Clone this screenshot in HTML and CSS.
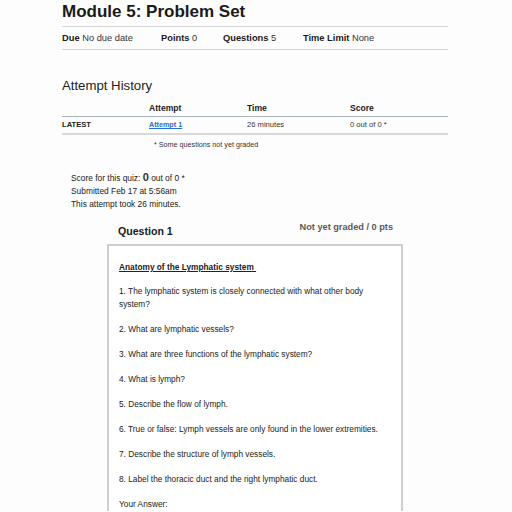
FILE: index.html
```html
<!DOCTYPE html>
<html>
<head>
<meta charset="utf-8">
<link rel="stylesheet" href="styles.css">
</head>
<body>
<div class="page">
  <h1 class="title">Module 5: Problem Set</h1>
  <div class="info">
    <span class="info-item i1"><b>Due</b> No due date</span>
    <span class="info-item i2"><b>Points</b> 0</span>
    <span class="info-item i3"><b>Questions</b> 5</span>
    <span class="info-item i4"><b>Time Limit</b> None</span>
  </div>

  <h2 class="history">Attempt History</h2>
  <div class="table">
    <div class="row head">
      <span class="c1"></span>
      <span class="c2">Attempt</span>
      <span class="c3">Time</span>
      <span class="c4">Score</span>
    </div>
    <div class="row body">
      <span class="c1 latest">LATEST</span>
      <span class="c2"><a class="link">Attempt 1 </a></span>
      <span class="c3">26 minutes</span>
      <span class="c4">0 out of 0 *</span>
    </div>
  </div>
  <p class="footnote">* Some questions not yet graded</p>

  <div class="summary">
    <div>Score for this quiz: <span class="big">0</span> out of 0 *</div>
    <div>Submitted Feb 17 at 5:56am</div>
    <div>This attempt took 26 minutes.</div>
  </div>

  <div class="question">
    <div class="qhead">
      <span class="qtitle">Question 1</span>
      <span class="qpts">Not yet graded / 0 pts</span>
    </div>
    <div class="qbox">
      <p class="qsub"><u>Anatomy of the Lymphatic system&nbsp;</u></p>
      <p>1. The lymphatic system is closely connected with what other body system?</p>
      <p>2. What are lymphatic vessels?</p>
      <p>3. What are three functions of the lymphatic system?</p>
      <p>4. What is lymph?</p>
      <p>5. Describe the flow of lymph.</p>
      <p>6. True or false: Lymph vessels are only found in the lower extremities.</p>
      <p>7. Describe the structure of lymph vessels.</p>
      <p>8. Label the thoracic duct and the right lymphatic duct.</p>
      <p class="last">Your Answer:</p>
    </div>
  </div>
</div>
</body>
</html>
```
FILE: styles.css
```css
html, body {
  margin: 0;
  padding: 0;
  background: #fdfdfd;
  overflow: hidden;
}
body {
  font-family: "Liberation Sans", Arial, sans-serif;
  color: #222;
  width: 512px;
  height: 512px;
}
.page {
  padding: 0 64px 0 62px;
}
.title {
  margin: 0;
  padding-top: 2px;
  font-size: 17px;
  font-weight: bold;
  line-height: 20px;
  height: 24px;
  border-bottom: 1px solid #d6d6d6;
  color: #1a1a1a;
}
.info {
  position: relative;
  height: 22px;
  border-bottom: 1px solid #d6d6d6;
  font-size: 9.3px;
  line-height: 22px;
  color: #333;
}
.info-item b { color: #1a1a1a; }
.info-item { position: absolute; top: 0; }
.i1 { left: 0; }
.i2 { left: 99px; }
.i3 { left: 161px; }
.i4 { left: 241px; }
.history {
  margin: 28px 0 0 0;
  font-size: 13.2px;
  font-weight: normal;
  line-height: 16px;
  color: #222;
}
.table {
  margin-top: 7px;
}
.row {
  display: grid;
  grid-template-columns: 87px 98px 103px 1fr;
  font-size: 7.6px;
}
.head {
  height: 15px;
  line-height: 14px;
  font-size: 8.6px;
  font-weight: bold;
  border-bottom: 1px solid #a9b3bd;
}
.body {
  height: 16px;
  line-height: 16px;
  border-bottom: 2px solid #d8d8d8;
  color: #333;
}
.latest { font-weight: bold; color: #222; }
.link {
  color: #2a6fc9;
  text-decoration: underline;
  font-weight: bold;
  font-size: 7.2px;
}
.footnote {
  margin: 5px 0 0 92px;
  font-size: 7.2px;
  line-height: 10px;
  color: #333;
}
.summary {
  margin: 21px 0 0 9px;
  font-size: 8.4px;
  line-height: 13px;
  color: #222;
}
.big {
  font-size: 11px;
  font-weight: bold;
  color: #333;
}
.question {
  margin: 9px 0 0 45px;
  width: 296px;
}
.qhead {
  display: flex;
  justify-content: space-between;
  align-items: flex-start;
  height: 24px;
  padding: 0 10px 0 11px;
}
.qtitle {
  font-size: 10.6px;
  font-weight: bold;
  line-height: 14px;
  padding-top: 4px;
  color: #1a1a1a;
}
.qpts {
  font-size: 9.2px;
  font-weight: bold;
  color: #5a5a5a;
  line-height: 12px;
  padding-top: 1px;
}
.qbox {
  border: 2px solid #cfcfcf;
  border-bottom: none;
  padding: 15px 11px 0 10px;
  background: #fff;
  font-size: 8.3px;
  line-height: 13px;
  color: #222;
}
.qbox p {
  margin: 0 0 12px 0;
}
.qbox p.last {
  margin-bottom: 0;
}
.qsub {
  font-weight: bold;
  margin-bottom: 11px !important;
}
```
